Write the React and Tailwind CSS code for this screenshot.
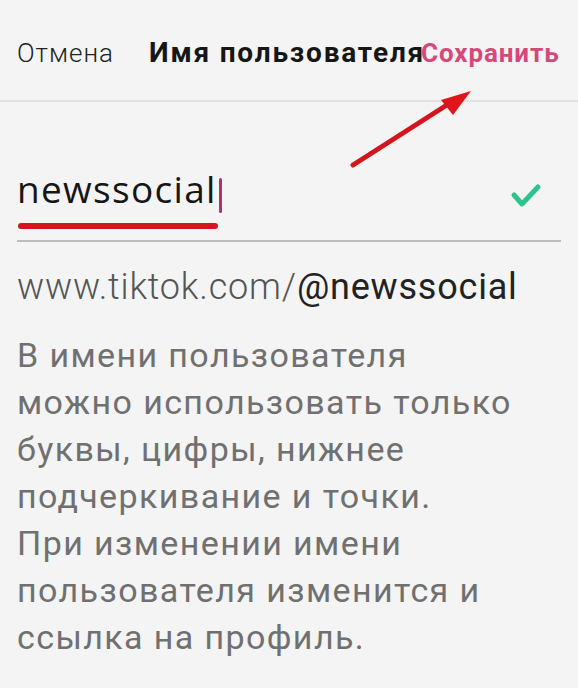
export default function App() {
  const lines = [
    "В имени пользователя",
    "можно использовать только",
    "буквы, цифры, нижнее",
    "подчеркивание и точки.",
    "При изменении имени",
    "пользователя изменится и",
    "ссылка на профиль.",
  ];
  return (
    <div className="relative w-[578px] h-[688px] bg-[#f4f4f4] overflow-hidden font-['Roboto',sans-serif]">
      <div className="flex items-center h-[102px] border-b-2 border-[#e2e2e2] pl-[17px]">
        <span className="text-[26px] font-light tracking-[1px] text-[#222] mt-[6px] leading-[32px]">Отмена</span>
        <span className="ml-[35px] text-[28px] font-bold tracking-[1.8px] text-[#161616] mt-[6px] leading-[32px] whitespace-nowrap">Имя пользователя</span>
        <span className="ml-[-4px] text-[26px] font-bold tracking-[0.9px] text-[#d6477a] mt-[6px] leading-[32px] whitespace-nowrap">Сохранить</span>
      </div>
      <div className="mx-[17px] pt-[67px] h-[140px] border-b-2 border-[#bdbdbd] flex items-start justify-between">
        <div className="flex flex-col items-start">
          <div className="flex items-start">
            <span className="font-['Open_Sans',sans-serif] font-medium text-[37px] leading-[40px] text-[#161616] tracking-[1.3px] whitespace-nowrap">newssocial</span>
            <span className="ml-[2px] w-[3px] h-[35px] bg-[#b0336a] rounded-sm mt-[9px]"></span>
          </div>
          <div className="mt-[10px] ml-[1px] w-[200px] h-[6px] rounded-full bg-[#d4151d]"></div>
        </div>
        <svg width="34" height="30" viewBox="0 0 34 30" className="mt-[13px] mr-[19px]">
          <path d="M6 13 L14 22 L30 5" fill="none" stroke="#2cc48c" strokeWidth="5" strokeLinecap="round" strokeLinejoin="round" />
        </svg>
      </div>
      <div className="px-[17px] pt-[23px] text-[36px] leading-[44px] tracking-[0.8px] whitespace-nowrap">
        <span className="font-light text-[#555]">www.tiktok.com/</span>
        <span className="text-[#222]">@newssocial</span>
      </div>
      <div className="px-[17px] pt-[23px] text-[34px] leading-[47px] tracking-[1.4px] text-[#707070] font-normal whitespace-nowrap">
        {lines.map((l) => (
          <div key={l}>{l}</div>
        ))}
      </div>
      <svg className="absolute left-0 top-0 pointer-events-none" width="578" height="688">
        <line x1="353" y1="165" x2="450" y2="103" stroke="#d4151d" strokeWidth="5" strokeLinecap="round" />
        <polygon points="471,91 441,100 453,115" fill="#e0141b" />
      </svg>
    </div>
  );
}
